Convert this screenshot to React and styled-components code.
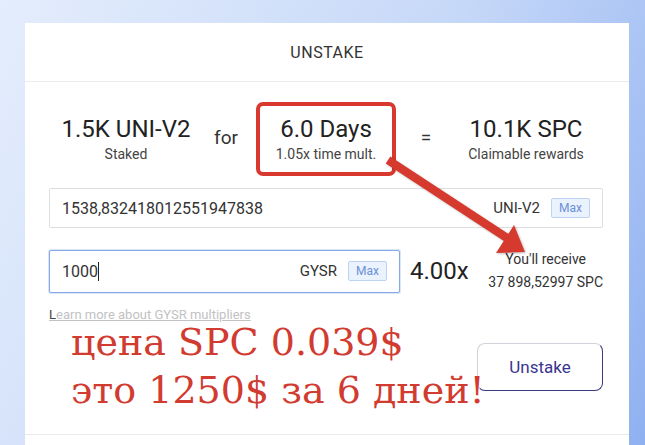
import styled, { createGlobalStyle } from "styled-components";

const GlobalStyle = createGlobalStyle`
  html, body {
    margin: 0;
    height: 100%;
  }
  body {
    background: linear-gradient(115deg, #e4edfc 0%, #c6d8f8 55%, #8fb0f0 100%);
    font-family: Roboto, "Noto Sans", Arial, sans-serif;
    overflow: hidden;
  }
`;

export default function App() {
  return (
    <>
      <GlobalStyle />
      <Page>
        <Card>
          <Header>UNSTAKE</Header>
          <Body>
            <Stats>
              <Stat>
                <Value>1.5K UNI-V2</Value>
                <Label>Staked</Label>
              </Stat>
              <Conj>for</Conj>
              <Stat $boxed>
                <Value>6.0 Days</Value>
                <Label>1.05x time mult.</Label>
              </Stat>
              <Conj>=</Conj>
              <Stat>
                <Value>10.1K SPC</Value>
                <Label>Claimable rewards</Label>
              </Stat>
            </Stats>

            <Field>
              <FieldText>1538,832418012551947838</FieldText>
              <Unit>UNI-V2</Unit>
              <MaxButton>Max</MaxButton>
            </Field>

            <BoostRow>
              <Field $focused>
                <FieldText>
                  1000
                  <Caret />
                </FieldText>
                <Unit>GYSR</Unit>
                <MaxButton>Max</MaxButton>
              </Field>
              <Multiplier>4.00x</Multiplier>
              <Receive>
                <div>You'll receive</div>
                <div>37 898,52997 SPC</div>
              </Receive>
            </BoostRow>

            <LearnLink>
              <Dark>L</Dark>earn more about GYSR multipliers
            </LearnLink>

            <Actions>
              <UnstakeButton>Unstake</UnstakeButton>
            </Actions>
          </Body>
          <Footer />

          <Annotation>
            <AnnotationLine>цена SPC 0.039$</AnnotationLine>
            <AnnotationLine $next>это 1250$ за 6 дней!</AnnotationLine>
          </Annotation>
          <Arrow viewBox="380 153 180 130">
            <line
              x1="388"
              y1="160"
              x2="507"
              y2="238"
              stroke="#d63a2f"
              strokeWidth="8.5"
            />
            <polygon points="496,253 514,225 525,252" fill="#d63a2f" />
          </Arrow>
        </Card>
      </Page>
    </>
  );
}

const Page = styled.div`
  padding: 23px 16px 0 25px;
`;

const Card = styled.div`
  position: relative;
  background: #fff;
  min-height: calc(100vh - 23px);
`;

const Header = styled.div`
  height: 58px;
  display: flex;
  align-items: center;
  justify-content: center;
  font-size: 16px;
  letter-spacing: 0.5px;
  color: #333;
  border-bottom: 1px solid #ececec;
`;

const Body = styled.div`
  padding: 20px 26px 43px 24px;
  border-bottom: 1px solid #e9e9e9;
`;

const Stats = styled.div`
  display: grid;
  grid-template-columns: 160px 40px 160px 40px 160px;
  justify-content: center;
  align-items: center;
`;

const Stat = styled.div`
  display: flex;
  flex-direction: column;
  align-items: center;
  justify-self: center;
  white-space: nowrap;
  border: ${(p) => (p.$boxed ? "4px solid #d9382e" : "none")};
  border-radius: 7px;
  padding: ${(p) => (p.$boxed ? "9px 16px" : "0")};
`;

const Value = styled.div`
  font-size: 24px;
  line-height: 28px;
  color: #222;
`;

const Label = styled.div`
  font-size: 14px;
  line-height: 18px;
  margin-top: 2px;
  color: #444;
`;

const Conj = styled.div`
  text-align: center;
  font-size: 19px;
  color: #333;
  padding-bottom: 4px;
`;

const Field = styled.div`
  box-sizing: border-box;
  display: flex;
  align-items: center;
  height: ${(p) => (p.$focused ? "43px" : "40px")};
  width: ${(p) => (p.$focused ? "351px" : "auto")};
  margin-top: ${(p) => (p.$focused ? "0" : "12px")};
  padding: 0 12px;
  border: 1px solid ${(p) => (p.$focused ? "#86a9e3" : "#dedede")};
  box-shadow: ${(p) => (p.$focused ? "0 0 0 1px rgba(134,169,227,0.3)" : "none")};
  border-radius: 2px;
  background: #fff;
`;

const FieldText = styled.div`
  flex: 1;
  display: flex;
  align-items: center;
  font-size: 16px;
  color: #333;
`;

const Caret = styled.span`
  display: inline-block;
  width: 1px;
  height: 19px;
  background: #222;
`;

const Unit = styled.span`
  font-size: 15px;
  color: #333;
`;

const MaxButton = styled.button`
  margin-left: 11px;
  width: 39px;
  height: 20px;
  padding: 0;
  border: 1px solid #bcd3f2;
  border-radius: 2px;
  background: #e9f2fd;
  color: #6d8fd8;
  font-family: inherit;
  font-size: 12px;
`;

const BoostRow = styled.div`
  display: flex;
  align-items: center;
  margin-top: 20px;
`;

const Multiplier = styled.div`
  margin-left: 10px;
  font-size: 24px;
  color: #222;
`;

const Receive = styled.div`
  margin-left: auto;
  text-align: center;
  font-size: 14px;
  line-height: 23px;
  color: #333;
`;

const LearnLink = styled.a`
  display: inline-block;
  margin-top: 13px;
  font-size: 13px;
  line-height: 16px;
  color: #c2c2c2;
  text-decoration: underline;
`;

const Dark = styled.span`
  color: #444;
`;

const Actions = styled.div`
  display: flex;
  justify-content: flex-end;
  margin-top: 20px;
`;

const UnstakeButton = styled.button`
  width: 126px;
  height: 48px;
  background: #fff;
  border: 1px solid;
  border-color: #d2d2da #3b3880 #3b3880 #d2d2da;
  border-radius: 8px;
  color: #3a3590;
  font-family: inherit;
  font-size: 17px;
`;

const Footer = styled.div`
  height: 40px;
`;

const Annotation = styled.div`
  position: absolute;
  left: 46px;
  top: 301px;
  font-family: "DejaVu Serif", Georgia, serif;
  font-size: 38px;
  line-height: 36px;
  color: #d13b30;
  white-space: nowrap;
`;

const AnnotationLine = styled.div`
  margin-top: ${(p) => (p.$next ? "12px" : "0")};
`;

const Arrow = styled.svg`
  position: absolute;
  left: 355px;
  top: 130px;
  width: 180px;
  height: 130px;
  filter: drop-shadow(1px 1px 1px rgba(0, 0, 0, 0.25));
`;
